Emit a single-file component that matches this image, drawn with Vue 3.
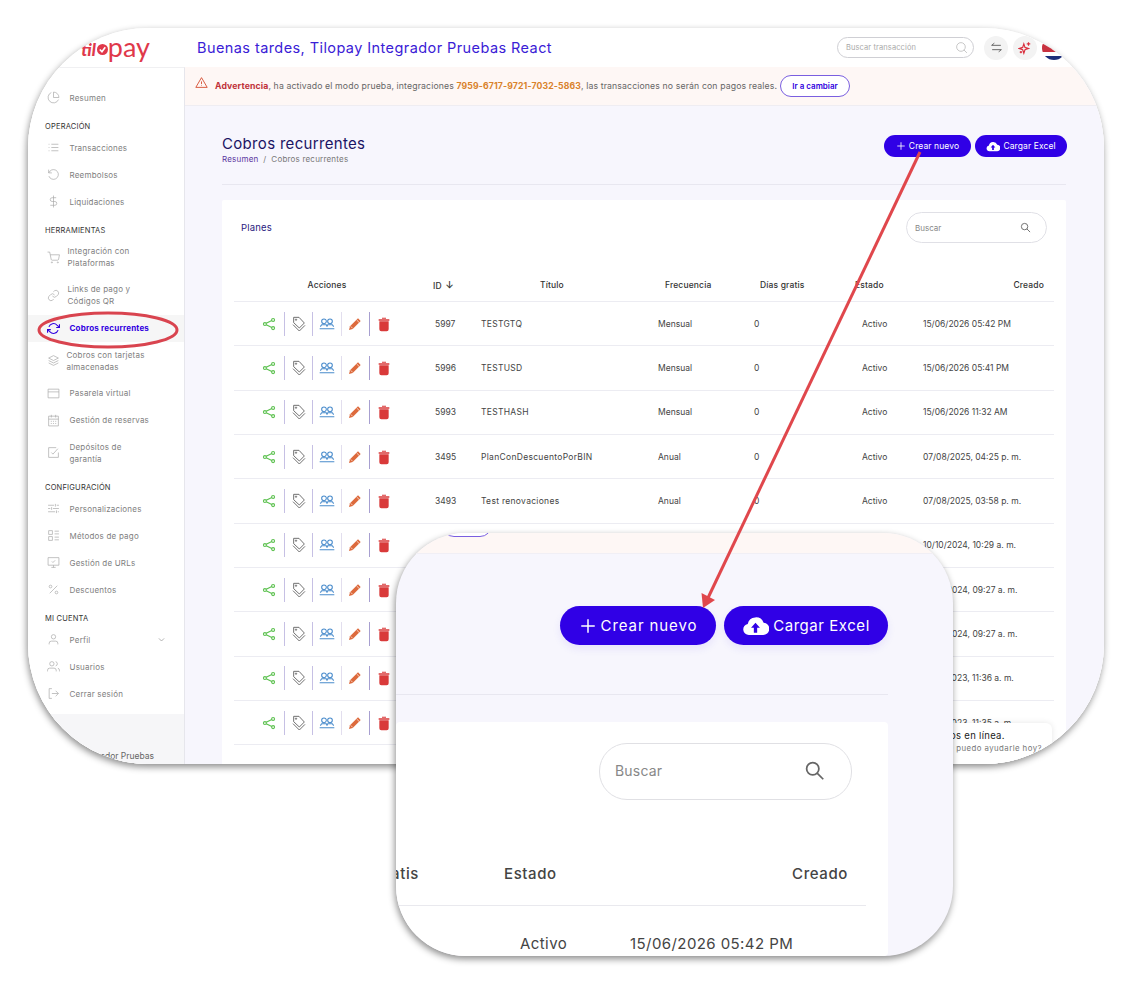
<script setup>
const circ = (x, y, r) => `M${x - r} ${y}a${r} ${r} 0 1 0 ${r * 2} 0a${r} ${r} 0 1 0 ${-r * 2} 0`
const rect = (x, y, w, h) => `M${x} ${y}h${w}v${h}h${-w}z`

const icons = {
  pie: ['M21.2 15.9A10 10 0 1 1 8 2.8', 'M22 12A10 10 0 0 0 12 2v10z'],
  list: ['M8 6h13M8 12h13M8 18h13M3 6h1.5M3 12h1.5M3 18h1.5'],
  undo: ['M3 3v6h6', 'M3.5 15a9 9 0 1 0 2.1-9.4L3 9'],
  dollar: ['M12 1v22', 'M17 5H9.5a3.5 3.5 0 0 0 0 7h5a3.5 3.5 0 0 1 0 7H6'],
  cart: [circ(9, 21, 1), circ(20, 21, 1), 'M1 2h4l2.7 13.4a2 2 0 0 0 2 1.6h9.7a2 2 0 0 0 2-1.6L23 7H6'],
  link: ['M10 13a5 5 0 0 0 7.5.5l3-3a5 5 0 0 0-7-7l-1.8 1.7', 'M14 11a5 5 0 0 0-7.5-.5l-3 3a5 5 0 0 0 7 7l1.7-1.7'],
  sync: ['M23 4v6h-6', 'M1 20v-6h6', 'M3.5 9a9 9 0 0 1 14.9-3.4L23 10M1 14l4.6 4.4A9 9 0 0 0 20.5 15'],
  layers: ['M12 3l9 4.5-9 4.5-9-4.5z', 'M3 12l9 4.5 9-4.5', 'M3 16.5l9 4.5 9-4.5'],
  card: [rect(2, 4, 20, 16), 'M2 9h20'],
  calendar: [rect(3, 4, 18, 18), 'M8 1.5v5M16 1.5v5M3 9.5h18M7 13.5h2M11 13.5h2M15 13.5h2M7 17.5h2M11 17.5h2M15 17.5h2'],
  check: ['M21 12v9H3V3h14', 'M8 12l3 3 9-10'],
  sliders: ['M2 6h11M18 6h4M2 12h4M11 12h11M2 18h13M20 18h2', 'M15.5 3.5v5M8.5 9.5v5M17.5 15.5v5'],
  methods: [rect(3, 3, 7, 7), rect(3, 14, 7, 7), 'M14 4h8M14 9h8M14 15h8M14 20h8'],
  monitor: [rect(2, 3, 20, 14), 'M8 21h8M12 17v4', 'M9 10l2 2 4-4'],
  percent: ['M19 5L5 19', circ(6.5, 6.5, 2.5), circ(17.5, 17.5, 2.5)],
  user: ['M20 21v-2a4 4 0 0 0-4-4H8a4 4 0 0 0-4 4v2', circ(12, 7, 4)],
  users: ['M17 21v-2a4 4 0 0 0-4-4H5a4 4 0 0 0-4 4v2', circ(9, 7, 4), 'M23 21v-2a4 4 0 0 0-3-3.9', 'M16 3.1a4 4 0 0 1 0 7.8'],
  logout: ['M9 21H4V3h5', 'M16 17l5-5-5-5', 'M21 12H9'],
}

const sections = [
  { items: [{ label: 'Resumen', icon: 'pie' }] },
  {
    title: 'Operación',
    items: [
      { label: 'Transacciones', icon: 'list' },
      { label: 'Reembolsos', icon: 'undo' },
      { label: 'Liquidaciones', icon: 'dollar' },
    ],
  },
  {
    title: 'Herramientas',
    items: [
      { label: 'Integración con Plataformas', icon: 'cart', tall: true },
      { label: 'Links de pago y Códigos QR', icon: 'link', tall: true },
      { label: 'Cobros recurrentes', icon: 'sync', active: true },
      { label: 'Cobros con tarjetas almacenadas', icon: 'layers', tall: true, tight: true },
      { label: 'Pasarela virtual', icon: 'card' },
      { label: 'Gestión de reservas', icon: 'calendar' },
      { label: 'Depósitos de garantía', icon: 'check', tall: true, wide: true },
    ],
  },
  {
    title: 'Configuración',
    items: [
      { label: 'Personalizaciones', icon: 'sliders' },
      { label: 'Métodos de pago', icon: 'methods' },
      { label: 'Gestión de URLs', icon: 'monitor' },
      { label: 'Descuentos', icon: 'percent' },
    ],
  },
  {
    title: 'Mi cuenta',
    items: [
      { label: 'Perfil', icon: 'user', caret: true },
      { label: 'Usuarios', icon: 'users' },
      { label: 'Cerrar sesión', icon: 'logout' },
    ],
  },
]

const rows = [
  ['5997', 'TESTGTQ', 'Mensual', '15/06/2026 05:42 PM'],
  ['5996', 'TESTUSD', 'Mensual', '15/06/2026 05:41 PM'],
  ['5993', 'TESTHASH', 'Mensual', '15/06/2026 11:32 AM'],
  ['3495', 'PlanConDescuentoPorBIN', 'Anual', '07/08/2025, 04:25 p. m.'],
  ['3493', 'Test renovaciones', 'Anual', '07/08/2025, 03:58 p. m.'],
  ['3120', 'Plan anual', 'Anual', '10/10/2024, 10:29 a. m.'],
  ['3016', 'Plan mensual', 'Mensual', '10/10/2024, 09:27 a. m.'],
  ['3015', 'Plan mensual', 'Mensual', '10/10/2024, 09:27 a. m.'],
  ['2204', 'Plan prueba', 'Mensual', '12/12/2023, 11:36 a. m.'],
  ['2203', 'Plan prueba', 'Mensual', '12/12/2023, 11:35 a. m.'],
]
</script>

<template>
  <div class="stage">
    <div class="window">
      <header class="topbar">
        <div class="logo">
          <span class="logo-bold">til</span>
          <svg class="logo-o" viewBox="0 0 20 20">
            <circle cx="10" cy="10" r="10" fill="#e0384a" />
            <path d="M5 10l4 4 6-8" fill="none" stroke="#fff" stroke-width="3" />
          </svg>
          <span class="logo-light">pay</span>
        </div>
        <div class="greeting">Buenas tardes, Tilopay Integrador Pruebas React</div>
        <div class="top-search">
          <span>Buscar transacción</span>
          <svg viewBox="0 0 24 24" class="top-search-icon"><path :d="circ(11, 11, 8)" /><path d="M22 22l-5.5-5.5" /></svg>
        </div>
        <div class="round-btn">
          <svg viewBox="0 0 24 24" class="swap"><path d="M3 8h17M3 8l5-4M21 16H4M21 16l-5 4" /></svg>
        </div>
        <div class="round-btn">
          <svg viewBox="0 0 24 24" class="spark">
            <path d="M10 5l2 6 6 2-6 2-2 6-2-6-6-2 6-2z" />
            <path d="M18 2v6M15 5h6M5 17v4M3 19h4" />
          </svg>
        </div>
        <div class="flag"></div>
      </header>

      <div class="body">
        <aside class="sidebar">
          <nav class="nav">
            <div v-for="(section, i) in sections" :key="i" class="nav-section">
              <div v-if="section.title" class="nav-title">{{ section.title }}</div>
              <div
                v-for="item in section.items"
                :key="item.label"
                class="nav-item"
                :class="{ tall: item.tall, tight: item.tight, wide: item.wide, active: item.active }"
              >
                <svg class="nav-icon" viewBox="0 0 24 24">
                  <path v-for="d in icons[item.icon]" :key="d" :d="d" />
                </svg>
                <span class="nav-label">{{ item.label }}</span>
                <svg v-if="item.caret" class="caret" viewBox="0 0 24 24"><path d="M5 9l7 7 7-7" /></svg>
              </div>
            </div>
          </nav>
          <div class="side-foot">Tilopay Integrador Pruebas</div>
        </aside>

        <main class="main">
          <div class="warning">
            <svg class="warn-icon" viewBox="0 0 24 24">
              <path d="M12 3L1.5 21h21z" />
              <path d="M12 10v5M12 17.5v1" />
            </svg>
            <p>
              <b class="warn-red">Advertencia</b>, ha activado el modo prueba, integraciones
              <b class="warn-orange">7959-6717-9721-7032-5863</b>, las transacciones no serán con pagos reales.
            </p>
            <button class="change-btn">Ir a cambiar</button>
          </div>

          <div class="content">
            <div class="page-head">
              <div>
                <h1>Cobros recurrentes</h1>
                <div class="crumbs"><span class="crumb-link">Resumen</span> &nbsp;/&nbsp; Cobros recurrentes</div>
              </div>
              <div class="head-actions">
                <button class="primary new-btn">
                  <svg viewBox="0 0 24 24" class="plus"><path d="M12 3v18M3 12h18" /></svg>
                  Crear nuevo
                </button>
                <button class="primary excel-btn">
                  <svg viewBox="0 0 24 18" class="cloud">
                    <path fill="#fff" d="M6 17a5 5 0 0 1-1-9.9A7.5 7.5 0 0 1 19.3 6 5.5 5.5 0 0 1 18.5 17z" />
                    <path fill="#3000e6" d="M12 6l4 4.5h-2.5V15h-3v-4.5H8z" />
                  </svg>
                  Cargar Excel
                </button>
              </div>
            </div>

            <div class="card">
              <div class="card-head">
                <span class="planes">Planes</span>
                <div class="search">
                  <span>Buscar</span>
                  <svg viewBox="0 0 24 24" class="search-icon"><path :d="circ(10, 10, 7)" /><path d="M15 15l7 7" /></svg>
                </div>
              </div>

              <div class="row head-row">
                <div class="cell-actions">Acciones</div>
                <div class="h-id">ID <span class="sort">↓</span></div>
                <div class="h-title">Título</div>
                <div class="h-freq">Frecuencia</div>
                <div class="h-days">Días gratis</div>
                <div class="h-state">Estado</div>
                <div class="h-created">Creado</div>
              </div>

              <div v-for="row in rows" :key="row[0]" class="row">
                <div class="cell-actions action-icons">
                  <svg viewBox="0 0 24 24" class="ic share">
                    <path :d="circ(19, 5, 2.5)" /><path :d="circ(5, 12, 2.5)" /><path :d="circ(19, 19, 2.5)" />
                    <path d="M7.2 10.8l9.6-4.7M7.2 13.2l9.6 4.7" />
                  </svg>
                  <i class="sep"></i>
                  <svg viewBox="0 0 24 24" class="ic tag">
                    <path d="M4 2h8l8 8.5-7.5 7.5L4 10z" />
                    <path d="M3 13l9.5 9.5L21 14" />
                    <path :d="circ(7.5, 5.5, 1)" />
                  </svg>
                  <i class="sep"></i>
                  <svg viewBox="0 0 24 24" class="ic people">
                    <path :d="circ(7.5, 8, 3.5)" /><path :d="circ(16.5, 8, 3.5)" />
                    <path d="M2 16l2-3h7l1 3M12 16l1-3h7l2 3M1 19h22" />
                  </svg>
                  <i class="sep sep-light"></i>
                  <svg viewBox="0 0 24 24" class="ic pencil">
                    <path d="M3 21l1.5-5.5L16.5 3.500l4 4L8.5 19.500z" />
                    <path class="pencil-cut" d="M14.5 6l3.5 3.5M5.5 15.5l3 3" />
                  </svg>
                  <i class="sep sep-dark"></i>
                  <svg viewBox="0 0 24 24" class="ic trash">
                    <path d="M4 5h16v2H4zM9 2.5h6V4H9zM5 8h14v12a3 3 0 0 1-3 3H8a3 3 0 0 1-3-3z" />
                  </svg>
                </div>
                <div class="c-id">{{ row[0] }}</div>
                <div class="c-title">{{ row[1] }}</div>
                <div class="c-freq">{{ row[2] }}</div>
                <div class="c-days">0</div>
                <div class="c-state">Activo</div>
                <div class="c-created">{{ row[3] }}</div>
              </div>
            </div>
          </div>
        </main>
      </div>

      <div class="chat">
        <div class="chat-title">Estamos en línea.</div>
        <div class="chat-sub">¿En qué puedo ayudarle hoy?</div>
      </div>
    </div>

    <svg class="annot" viewBox="0 0 1134 982">
      <ellipse cx="108" cy="330" rx="69" ry="17" fill="none" stroke="#d9444f" stroke-width="3" />
    </svg>

    <div class="lens">
      <div class="lens-band"><span class="lens-pill"></span></div>
      <div class="lens-actions">
        <button class="primary lens-new">
          <svg viewBox="0 0 24 24" class="lens-plus"><path d="M12 3v18M3 12h18" /></svg>
          Crear nuevo
        </button>
        <button class="primary lens-excel">
          <svg viewBox="0 0 24 18" class="lens-cloud">
            <path fill="#fff" d="M6 17a5 5 0 0 1-1-9.9A7.5 7.5 0 0 1 19.3 6 5.5 5.5 0 0 1 18.5 17z" />
            <path fill="#3000e6" d="M12 6l4 4.5h-2.5V15h-3v-4.5H8z" />
          </svg>
          Cargar Excel
        </button>
      </div>
      <div class="lens-divider"></div>
      <div class="lens-card">
        <div class="lens-search">
          <span>Buscar</span>
          <svg viewBox="0 0 24 24" class="lens-search-icon"><path :d="circ(10, 10, 7)" /><path d="M15 15l7 7" /></svg>
        </div>
        <div class="lens-head">
          <div class="lens-clip"><span>Días gratis</span></div>
          <div class="lens-state">Estado</div>
          <div class="lens-created">Creado</div>
        </div>
        <div class="lens-row">
          <div>Activo</div>
          <div>15/06/2026 05:42 PM</div>
        </div>
      </div>
    </div>

    <svg class="annot arrow" viewBox="0 0 1134 982">
      <path d="M920 152L707 600" fill="none" stroke="#e0474c" stroke-width="3" />
      <path d="M703 608l-1.5-15 13.5 7z" fill="#e0474c" />
    </svg>
  </div>
</template>

<style>
html,
body {
  margin: 0;
  background: #fff;
}
</style>

<style scoped>
.stage {
  position: relative;
  width: 1134px;
  height: 982px;
  overflow: hidden;
  background: #fff;
  font-family: Inter, "Noto Sans", sans-serif;
  color: #333;
}

button {
  font-family: inherit;
  border: none;
  cursor: pointer;
}

/* main screenshot */
.window {
  position: absolute;
  left: 28px;
  top: 28px;
  width: 1076px;
  height: 736px;
  display: flex;
  flex-direction: column;
  background: #fff;
  border-radius: 120px;
  overflow: hidden;
}
.stage::before {
  content: "";
  position: absolute;
  left: 28px;
  top: 28px;
  width: 1076px;
  height: 736px;
  border-radius: 120px;
  box-shadow: -1px 3px 7px rgba(0, 0, 0, 0.45);
}

.topbar {
  height: 39px;
  flex: none;
  display: flex;
  align-items: center;
}
.logo {
  width: 122px;
  flex: none;
  display: flex;
  justify-content: flex-end;
  align-items: center;
  color: #e0384a;
  font-family: Lato, sans-serif;
  line-height: 1;
}
.logo-bold {
  font-size: 17px;
  font-weight: 900;
  font-style: italic;
  margin-top: 3px;
}
.logo-o {
  width: 11px;
  height: 11px;
  margin: 4px 0 0 1px;
}
.logo-light {
  font-size: 27px;
  font-weight: 400;
  margin-top: -3px;
}
.greeting {
  margin-left: 47px;
  font-size: 14.5px;
  font-weight: 400;
  letter-spacing: 0.42px;
  color: #3a20d6;
  white-space: nowrap;
  flex: 1;
}
.top-search {
  width: 137px;
  height: 21px;
  margin-left: 1px;
  box-sizing: border-box;
  border: 1px solid #cfcfd4;
  border-radius: 11px;
  display: flex;
  align-items: center;
  justify-content: space-between;
  padding: 0 5px 0 8px;
  font-size: 7.5px;
  letter-spacing: 0.1px;
  color: #aaa;
}
.top-search-icon {
  width: 13px;
  height: 13px;
  fill: none;
  stroke: #bbb;
  stroke-width: 1.5;
}
.round-btn {
  width: 24px;
  height: 24px;
  flex: none;
  border-radius: 50%;
  background: #f3f3f3;
  margin-left: 5px;
  display: flex;
  align-items: center;
  justify-content: center;
}
.top-search + .round-btn {
  margin-left: 10px;
}
.swap {
  width: 13px;
  height: 13px;
  fill: none;
  stroke: #555;
  stroke-width: 1.6;
}
.spark {
  width: 14px;
  height: 14px;
  fill: none;
  stroke: #d9303f;
  stroke-width: 2;
}
.flag {
  width: 24px;
  height: 24px;
  flex: none;
  margin: 0 38px 0 5px;
  border-radius: 50%;
  background: linear-gradient(#1d2f7a 0 17%, #fff 17% 33%, #c8323f 33% 67%, #fff 67% 83%, #1d2f7a 83%);
}

.body {
  flex: 1;
  min-height: 0;
  display: flex;
}

/* sidebar */
.sidebar {
  width: 156px;
  flex: none;
  display: flex;
  flex-direction: column;
  border-right: 1px solid #e6e6ec;
  border-top: 1px solid #f0f0f2;
  background: #fff;
}
.nav {
  padding-top: 16px;
  flex: none;
}
.nav-section + .nav-section {
  margin-top: 9px;
}
.nav-title {
  height: 14px;
  line-height: 14px;
  padding-left: 17px;
  font-size: 7.5px;
  color: #333;
  text-transform: uppercase;
  letter-spacing: 0.2px;
}
.nav-item {
  height: 27px;
  display: flex;
  align-items: center;
  padding-left: 17px;
  font-size: 8px;
  line-height: 12px;
  color: #808080;
  box-sizing: border-box;
}
.nav-item.tall {
  height: 38.25px;
}
.nav-icon {
  width: 13px;
  height: 13px;
  flex: none;
  margin-left: 1.5px;
  fill: none;
  stroke: #aaa;
  stroke-width: 1.3;
}
.nav-label {
  margin-left: 10px;
  letter-spacing: 0.2px;
}
.nav-item.tall .nav-label {
  margin-left: 8px;
  width: 72px;
}
.nav-item.tall.tight .nav-label {
  margin-left: 7px;
  width: 82px;
}
.nav-item.tall.wide .nav-label {
  margin-left: 10px;
  width: 62px;
}
.nav-item.active {
  background: #f6f6f6;
  color: #3000e0;
  font-weight: 700;
}
.nav-item.active .nav-icon {
  stroke: #3000e0;
  stroke-width: 2;
}
.caret {
  width: 9px;
  height: 9px;
  margin-left: auto;
  margin-right: 18px;
  fill: none;
  stroke: #999;
  stroke-width: 2;
}
.side-foot {
  flex: 1;
  margin-top: 7px;
  background: #f6f6f8;
  padding: 37px 30px 0 0;
  text-align: right;
  font-size: 8.5px;
  color: #666;
  white-space: nowrap;
}

/* main area */
.main {
  flex: 1;
  min-width: 0;
  background: #f7f6fd;
  overflow: hidden;
}
.warning {
  height: 39px;
  box-sizing: border-box;
  background: #fef7f5;
  border-bottom: 1px solid #efedf2;
  display: flex;
  align-items: center;
  padding-left: 10px;
  font-size: 8.7px;
  letter-spacing: 0.13px;
  color: #666;
  white-space: nowrap;
}
.warn-icon {
  width: 13px;
  height: 13px;
  flex: none;
  margin-top: -8px;
  fill: none;
  stroke: #d8593f;
  stroke-width: 1.8;
}
.warning p {
  margin: 0 3px 0 7px;
  width: 562px;
}
.warn-red {
  color: #c0323a;
  font-weight: 700;
}
.warn-orange {
  color: #d9822b;
  font-weight: 700;
}
.change-btn {
  width: 70px;
  height: 22px;
  background: #fff;
  border: 1px solid #7a5fe0;
  border-radius: 11px;
  color: #3000e0;
  font-size: 8px;
  font-weight: 600;
  padding: 0;
}

.content {
  padding: 29px 37px 0;
  width: 844px;
}
.page-head {
  display: flex;
  justify-content: space-between;
  align-items: flex-start;
  height: 49px;
  border-bottom: 1px solid #e8e7f0;
  margin-bottom: 15px;
}
h1 {
  margin: 0;
  font-size: 15px;
  line-height: 18px;
  font-weight: 400;
  letter-spacing: 0.32px;
  color: #1b1464;
}
.crumbs {
  font-size: 8px;
  color: #777;
  line-height: 12px;
  letter-spacing: 0.2px;
}
.crumb-link {
  color: #5a35a0;
}
.head-actions {
  display: flex;
  gap: 4px;
  margin-right: -1px;
}
.primary {
  background: #3000e6;
  color: #fff;
  border-radius: 22px;
  display: flex;
  align-items: center;
  justify-content: center;
  white-space: nowrap;
  padding: 0;
}
.new-btn,
.excel-btn {
  height: 22px;
  font-size: 8.5px;
  font-weight: 400;
  letter-spacing: 0.1px;
}
.new-btn {
  width: 87px;
}
.excel-btn {
  width: 92px;
}
.plus {
  width: 10px;
  height: 10px;
  margin-right: 3px;
  fill: none;
  stroke: #fff;
  stroke-width: 2;
}
.cloud {
  width: 14px;
  height: 11px;
  margin-right: 3px;
}

.card {
  background: #fff;
  border-radius: 2px;
  padding: 12px 12px 0;
  height: 700px;
}
.card-head {
  height: 31px;
  display: flex;
  align-items: center;
  justify-content: space-between;
  padding: 0 7px;
  margin-bottom: 25px;
}
.planes {
  font-size: 9.5px;
  letter-spacing: 0.2px;
  color: #2a1a80;
}
.search {
  width: 141px;
  height: 31px;
  box-sizing: border-box;
  border: 1px solid #e0e0e6;
  border-radius: 16px;
  display: flex;
  align-items: center;
  justify-content: space-between;
  padding: 0 15px 0 8px;
  font-size: 8px;
  color: #888;
}
.search-icon {
  width: 11px;
  height: 11px;
  fill: none;
  stroke: #666;
  stroke-width: 2;
}

.row {
  display: grid;
  grid-template-columns: 186px 61px 177px 96px 108px 61px 131px;
  align-items: center;
  height: 44.35px;
  box-sizing: border-box;
  border-bottom: 1px solid #ececf2;
  font-size: 8.5px;
  color: #444;
  white-space: nowrap;
}
.head-row {
  height: 34px;
  font-size: 8.5px;
  font-weight: 500;
  letter-spacing: 0.15px;
  color: #333;
}
.cell-actions {
  text-align: center;
}
.action-icons {
  display: flex;
  align-items: center;
  padding-left: 28px;
}
.sep {
  display: block;
  width: 1px;
  height: 24px;
  background: #c6c0e4;
}
.sep-light {
  background: #e2deee;
}
.sep-dark {
  background: #a79fd0;
}
.ic {
  width: 16px;
  height: 16px;
  flex: none;
  fill: none;
  margin: 0 5.7px;
}
.share {
  width: 14px;
  height: 14px;
  stroke: #5cc14f;
  stroke-width: 2;
  margin: 0 8px 0 0;
}
.tag {
  stroke: #666;
  stroke-width: 1.4;
}
.people {
  stroke: #4a8ccc;
  stroke-width: 1.6;
}
.pencil {
  fill: #dd6a3c;
}
.pencil-cut {
  stroke: #fff;
  stroke-width: 1;
}
.trash {
  fill: #d93a3a;
}
.h-id {
  padding-left: 13px;
}
.sort {
  font-size: 10px;
  margin-left: 1px;
}
.h-title {
  padding-left: 59px;
}
.h-freq {
  padding-left: 7px;
}
.h-days {
  padding-left: 6px;
}
.h-state {
  margin-left: -7px;
}
.h-created {
  text-align: right;
  padding-right: 10px;
}
.c-id {
  padding-left: 15px;
}
.c-title {
  letter-spacing: 0.3px;
}

/* floating chat */
.chat {
  position: absolute;
  left: 882px;
  top: 695px;
  width: 142px;
  height: 60px;
  box-sizing: border-box;
  padding: 6px 0 0 11px;
  background: #fff;
  border-radius: 6px;
  box-shadow: 0 0 6px rgba(0, 0, 0, 0.1);
  white-space: nowrap;
}
.chat-title {
  font-size: 9.5px;
  line-height: 13px;
  letter-spacing: 0.3px;
  color: #222;
}
.chat-sub {
  font-size: 7.8px;
  line-height: 12px;
  letter-spacing: 0.45px;
  color: #777;
}

.annot {
  position: absolute;
  left: 0;
  top: 0;
  width: 1134px;
  height: 982px;
  pointer-events: none;
}

/* zoomed detail */
.lens {
  position: absolute;
  left: 396px;
  top: 533px;
  width: 557px;
  height: 423px;
  display: flex;
  flex-direction: column;
  background: #f7f6fd;
  border-radius: 70px;
  overflow: hidden;
  box-shadow: -1px 3px 7px rgba(0, 0, 0, 0.45);
}
.lens-band {
  height: 20px;
  flex: none;
  background: #fef7f5;
  border-bottom: 1px solid #f1eff5;
  display: flex;
  align-items: flex-end;
}
.lens-pill {
  display: block;
  width: 50px;
  height: 24px;
  margin: 0 0 16px 46px;
  border: 1px solid #7a5fe0;
  border-radius: 12px;
  background: #fff;
  box-sizing: border-box;
}
.lens-actions {
  display: flex;
  justify-content: flex-end;
  gap: 8px;
  margin: 52px 65px 0 0;
}
.lens-actions .primary {
  height: 39px;
  font-size: 15px;
  font-weight: 400;
  letter-spacing: 0.55px;
  box-shadow: 0 4px 8px rgba(48, 0, 230, 0.08);
}
.lens-actions .lens-new {
  width: 156px;
  letter-spacing: 0.9px;
}
.lens-excel {
  width: 164px;
}
.lens-plus {
  width: 18px;
  height: 18px;
  margin-right: 4px;
  fill: none;
  stroke: #fff;
  stroke-width: 2;
}
.lens-cloud {
  width: 27px;
  height: 20px;
  margin-right: 4px;
}
.lens-divider {
  height: 1px;
  flex: none;
  margin: 49px 65px 0 0;
  background: #e8e7f0;
}
.lens-card {
  flex: 1;
  margin: 27px 65px 0 0;
  padding-top: 21px;
  background: #fff;
  border-radius: 4px;
}
.lens-search {
  width: 253px;
  height: 57px;
  margin-left: 203px;
  box-sizing: border-box;
  border: 1px solid #e0e0e4;
  border-radius: 28px;
  display: flex;
  align-items: center;
  justify-content: space-between;
  padding: 0 26px 2px 15px;
  font-size: 14px;
  letter-spacing: 0.2px;
  color: #888;
}
.lens-search-icon {
  width: 21px;
  height: 21px;
  fill: none;
  stroke: #666;
  stroke-width: 2;
}
.lens-head {
  display: grid;
  grid-template-columns: 23px 85px 344px;
  align-items: center;
  height: 106px;
  box-sizing: border-box;
  padding-top: 42px;
  border-bottom: 1px solid #e9e9ee;
  margin-right: 22px;
  font-size: 15px;
  font-weight: 500;
  letter-spacing: 0.6px;
  color: #444;
  white-space: nowrap;
}
.lens-clip {
  display: flex;
  justify-content: flex-end;
  overflow: hidden;
}
.lens-clip span {
  flex: none;
}
.lens-state {
  grid-column: 2;
  margin-left: 85px;
}
.lens-created {
  text-align: right;
}
.lens-row {
  display: grid;
  grid-template-columns: 110px auto;
  padding: 28px 0 0 124px;
  font-size: 15px;
  line-height: 20px;
  letter-spacing: 0.42px;
  color: #444;
  white-space: nowrap;
}
</style>
